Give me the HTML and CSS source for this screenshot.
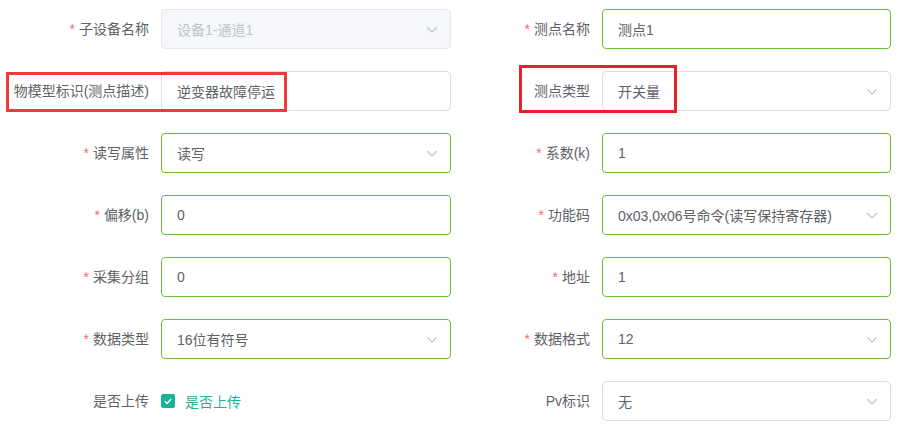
FILE: index.html
```html
<!DOCTYPE html>
<html lang="zh-CN">
<head>
    <meta charset="UTF-8">
    <meta name="viewport" content="width=device-width, initial-scale=1.0">
    <title>测点编辑</title>
    <link rel="stylesheet" href="styles.css">
</head>
<body>
    <form class="point-form">
        <div class="form-item">
            <label class="form-label required">子设备名称</label>
            <div class="control select is-disabled">
                <span class="value">设备1-通道1</span>
                <svg class="arrow" viewBox="0 0 12 7"><path d="M1 1l5 5 5-5"/></svg>
            </div>
        </div>
        <div class="form-item">
            <label class="form-label required">测点名称</label>
            <div class="control is-success"><span class="value">测点1</span></div>
        </div>

        <div class="form-item">
            <label class="form-label">物模型标识(测点描述)</label>
            <div class="control"><span class="value">逆变器故障停运</span></div>
        </div>
        <div class="form-item">
            <label class="form-label">测点类型</label>
            <div class="control select">
                <span class="value">开关量</span>
                <svg class="arrow" viewBox="0 0 12 7"><path d="M1 1l5 5 5-5"/></svg>
            </div>
        </div>

        <div class="form-item">
            <label class="form-label required">读写属性</label>
            <div class="control select is-success">
                <span class="value">读写</span>
                <svg class="arrow" viewBox="0 0 12 7"><path d="M1 1l5 5 5-5"/></svg>
            </div>
        </div>
        <div class="form-item">
            <label class="form-label required">系数(k)</label>
            <div class="control is-success"><span class="value">1</span></div>
        </div>

        <div class="form-item">
            <label class="form-label required">偏移(b)</label>
            <div class="control is-success"><span class="value">0</span></div>
        </div>
        <div class="form-item">
            <label class="form-label required">功能码</label>
            <div class="control select is-success">
                <span class="value">0x03,0x06号命令(读写保持寄存器)</span>
                <svg class="arrow" viewBox="0 0 12 7"><path d="M1 1l5 5 5-5"/></svg>
            </div>
        </div>

        <div class="form-item">
            <label class="form-label required">采集分组</label>
            <div class="control is-success"><span class="value">0</span></div>
        </div>
        <div class="form-item">
            <label class="form-label required">地址</label>
            <div class="control is-success"><span class="value">1</span></div>
        </div>

        <div class="form-item">
            <label class="form-label required">数据类型</label>
            <div class="control select is-success">
                <span class="value">16位有符号</span>
                <svg class="arrow" viewBox="0 0 12 7"><path d="M1 1l5 5 5-5"/></svg>
            </div>
        </div>
        <div class="form-item">
            <label class="form-label required">数据格式</label>
            <div class="control select is-success">
                <span class="value">12</span>
                <svg class="arrow" viewBox="0 0 12 7"><path d="M1 1l5 5 5-5"/></svg>
            </div>
        </div>

        <div class="form-item">
            <label class="form-label">是否上传</label>
            <div class="checkbox">
                <span class="checkbox-box">
                    <svg viewBox="0 0 14 14"><path d="M3.8 7.2l2.2 2.2 4.2-4.4"/></svg>
                </span>
                <span class="checkbox-text">是否上传</span>
            </div>
        </div>
        <div class="form-item">
            <label class="form-label">Pv标识</label>
            <div class="control select">
                <span class="value">无</span>
                <svg class="arrow" viewBox="0 0 12 7"><path d="M1 1l5 5 5-5"/></svg>
            </div>
        </div>

        <!-- 标注框 -->
        <div class="mark mark-model"></div>
        <div class="mark mark-type"></div>
    </form>
</body>
</html>
```

FILE: styles.css
```css
body {
    margin: 0;
    background-color: #fff;
    font-family: "Liberation Sans", "Noto Sans CJK SC", sans-serif;
    font-size: 14px;
    color: #606266;
}

.point-form {
    position: relative;
    display: grid;
    grid-template-columns: 440px 439px;
    column-gap: 1px;
    row-gap: 22px;
    padding: 9px 24px 0 11px;
}

.form-item {
    display: flex;
    align-items: center;
    height: 40px;
}

.form-label {
    width: 150px;
    flex-shrink: 0;
    box-sizing: border-box;
    padding-right: 12px;
    text-align: right;
    line-height: 40px;
    white-space: nowrap;
    color: #606266;
}

.form-label.required::before {
    content: "*";
    color: #f56c6c;
    margin-right: 4px;
}

.control {
    flex: 1;
    height: 40px;
    box-sizing: border-box;
    border: 1px solid #dcdfe6;
    border-radius: 4px;
    padding: 0 15px;
    display: flex;
    align-items: center;
    background-color: #fff;
}

.control .value {
    flex: 1;
    white-space: nowrap;
}

.control.is-success {
    border-color: #67c23a;
}

.control.is-disabled {
    background-color: #f5f7fa;
    border-color: #e4e7ed;
    color: #c0c4cc;
}

.arrow {
    width: 12px;
    height: 7px;
    margin-right: -3px;
    fill: none;
    stroke: #c0c4cc;
    stroke-width: 1.1;
}

.checkbox {
    display: flex;
    align-items: center;
}

.checkbox-box {
    width: 14px;
    height: 14px;
    border-radius: 2px;
    background-color: #1ab394;
    display: flex;
}

.checkbox-box svg {
    width: 14px;
    height: 14px;
    fill: none;
    stroke: #fff;
    stroke-width: 1.4;
}

.checkbox-text {
    margin-left: 10px;
    color: #1ab394;
}

.mark {
    position: absolute;
    box-sizing: border-box;
    border: 3px solid #f03a3a;
}

.mark-model {
    left: 6px;
    top: 72px;
    width: 281px;
    height: 40px;
}

.mark-type {
    left: 519px;
    top: 65px;
    width: 158px;
    height: 48px;
    border-color: #e8212b;
}
```
